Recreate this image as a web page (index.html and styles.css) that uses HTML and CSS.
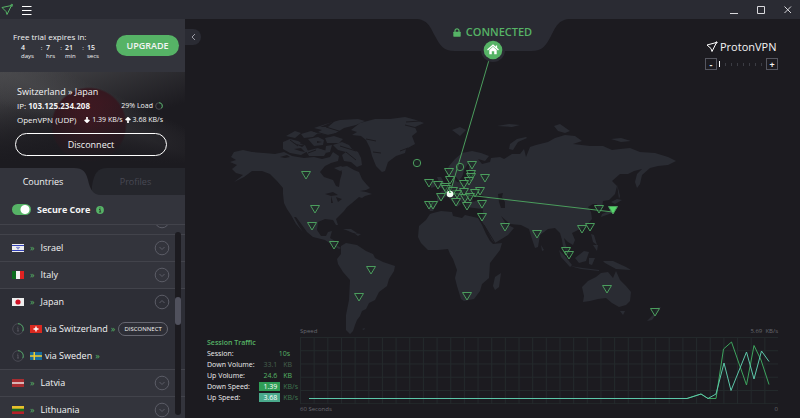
FILE: index.html
```html
<!DOCTYPE html>
<html lang="en">
<head>
<meta charset="utf-8">
<title>ProtonVPN</title>
<link rel="stylesheet" href="styles.css">
</head>
<body>
<svg class="defs" aria-hidden="true">
  <defs>
    <path id="pin" d="M-4.500 -3.500H4.500L0 4Z"/>
    <symbol id="chevron" viewBox="0 0 16 16"><circle cx="8" cy="8" r="6.800"/><path d="M5.500 7l2.500 2.500L10.500 7"/></symbol>
    <symbol id="load" viewBox="0 0 12 12"><circle cx="6" cy="6" r="5.300" fill="none" stroke="#50515b" stroke-width=".8"/><path d="M6 .7A5.300 5.300 0 0 1 10.800 8.200" fill="none" stroke="#4fa865" stroke-width="1"/><path d="M5 5h1v3M5 8h2M6 3.500v.8" fill="none" stroke="#5a5b64" stroke-width=".8"/></symbol>
  </defs>
</svg>
<header class="titlebar">
  <svg class="mark" viewBox="0 0 12 13" aria-hidden="true"><path d="M1 4.500L10.500 2.500 6 11.500 5 8.500Z"/><circle cx="10.800" cy="2.300" r="1"/></svg>
  <button class="menu" aria-label="Menu"><svg viewBox="0 0 10 10"><path d="M0 1.500h9.500M0 5.500h9.500M0 9.500h9.500"/></svg></button>
  <div class="window-controls">
    <button aria-label="Minimize"><svg viewBox="0 0 9 9"><path d="M1 8.500h8"/></svg></button>
    <button aria-label="Maximize"><svg viewBox="0 0 9 9"><path d="M1.500 1.500h7v7h-7z"/></svg></button>
    <button aria-label="Close"><svg viewBox="0 0 9 9"><path d="M1.500 1.500l6.500 6.500M8 1.500L1.500 8"/></svg></button>
  </div>
</header>
<div class="app">
  <aside class="sidebar">
    <section class="trial">
      <div>
        <p>Free trial expires in:</p>
        <div class="countdown">
          <span><b>4</b>days</span><i>:</i><span><b>7</b>hrs</span><i>:</i><span><b>21</b>min</span><i>:</i><span><b>15</b>secs</span>
        </div>
      </div>
      <button class="upgrade">UPGRADE</button>
    </section>
    <section class="connection">
      <h1>Switzerland » Japan</h1>
      <div class="line"><span>IP: <b>103.125.234.208</b></span><span class="small">29% Load <svg class="ring" viewBox="0 0 8 8"><circle cx="4" cy="4" r="3.300" stroke="#4b4b50"/><path d="M4 .7A3.300 3.300 0 0 1 6.500 6.200" stroke="#4fb164"/></svg></span></div>
      <div class="line"><span>OpenVPN (UDP)</span><span class="small"><svg class="arrow" viewBox="0 0 7 7"><path d="M3.500 0v6M.8 3.300l2.700 2.700 2.700-2.700"/></svg> 1.39 KB/s <svg class="arrow" viewBox="0 0 7 7"><path d="M3.500 7V1M.8 3.700L3.500 1l2.700 2.700"/></svg> 3.68 KB/s</span></div>
      <button class="disconnect">Disconnect</button>
    </section>
    <nav class="tabs">
      <svg class="tab-shape" viewBox="0 0 185 27" preserveAspectRatio="none" aria-hidden="true"><path d="M92 27V18C94 5 98 0 107 0H185V27Z" fill="#25262c"/><path d="M0 0H74C83 0 86 4 88 12C90 21 93 27 101 27H0Z" fill="#33343c"/></svg>
      <button class="active">Countries</button><button>Profiles</button>
    </nav>
    <div class="secure">
      <input type="checkbox" id="secure" checked><label for="secure">Secure Core</label>
      <svg class="info" viewBox="0 0 8 8"><circle cx="4" cy="4" r="3.900" fill="#56b366"/><path d="M3 3.500h1.200V6M3 6h2.200M4 1.500v1" stroke="#2d3d33" fill="none"/></svg>
    </div>
    <div class="countries">
      <ul>
        <li><button class="country" aria-label="Expand"><svg class="chev"><use href="#chevron"/></svg></button></li>
        <li><button class="country"><svg class="flag" viewBox="0 0 12 8"><path fill="#eee" d="M0 0h12v8H0z"/><path fill="#3240b8" d="M0 1h12v1H0zM0 6h12v1H0z"/><path d="M4.500 3.300h3L6 5.300z" fill="none" stroke="#3240b8" stroke-width=".6"/></svg><span class="core">»</span><span>Israel</span><svg class="chev"><use href="#chevron"/></svg></button></li>
        <li><button class="country"><svg class="flag" viewBox="0 0 12 8"><path fill="#0b6b1d" d="M0 0h4v8H0z"/><path fill="#f2f2f2" d="M4 0h4v8H4z"/><path fill="#e02222" d="M8 0h4v8H8z"/></svg><span class="core">»</span><span>Italy</span><svg class="chev"><use href="#chevron"/></svg></button></li>
        <li class="open"><button class="country"><svg class="flag" viewBox="0 0 12 8"><path fill="#eee" d="M0 0h12v8H0z"/><circle cx="6" cy="4" r="2.600" fill="#cf1126"/></svg><span class="core">»</span><span>Japan</span><svg class="chev flipped"><use href="#chevron"/></svg></button>
          <div class="via"><svg class="load"><use href="#load"/></svg><svg class="flag" viewBox="0 0 12 8"><path fill="#d92920" d="M0 0h12v8H0z"/><path fill="#fff" d="M5.300 1.500h1.400v1.800h1.800v1.400H6.700v1.800H5.300V4.700H3.500V3.300h1.800z"/></svg><span>via Switzerland</span><span class="core">»</span><button class="drop">DISCONNECT</button></div>
          <div class="via"><svg class="load"><use href="#load"/></svg><svg class="flag" viewBox="0 0 12 8"><path fill="#176b9d" d="M0 0h12v8H0z"/><path fill="#f2cc2b" d="M3.500 0H5v8H3.500zM0 3.300h12v1.400H0z"/></svg><span>via Sweden</span><span class="core">»</span></div>
        </li>
        <li><button class="country"><svg class="flag" viewBox="0 0 12 8"><path fill="#a82d31" d="M0 0h12v8H0z"/><path fill="#eee" d="M0 3.300h12v1.400H0z"/></svg><span class="core">»</span><span>Latvia</span><svg class="chev"><use href="#chevron"/></svg></button></li>
        <li><button class="country"><svg class="flag" viewBox="0 0 12 8"><path fill="#e9c02c" d="M0 0h12v3H0z"/><path fill="#176b22" d="M0 2.700h12v3H0z"/><path fill="#b5202a" d="M0 5.400h12V8H0z"/></svg><span class="core">»</span><span>Lithuania</span><svg class="chev"><use href="#chevron"/></svg></button></li>
      </ul>
      <div class="scroll"><div class="thumb"></div></div>
    </div>
  </aside>
  <main class="stage">
    <svg class="map" viewBox="185 19 615 399" preserveAspectRatio="xMidYMid slice" aria-label="World map">
      <g class="land">
        <path d="M231 157L234 152 243 150 252 152 264 153 275 154 284 152 292 156 304 158 314 157 322 159 330 157 333 152 339 156 338 161 331 163 325 166 320 172 324 177 333 180 336 186 339 187 340 180 342 173 341 167 347 166 354 170 359 172 362 179 367 185 370 188 366 190 360 191 366 192 372 194 365 196 362 198 359 197 352 203 347 207 344 211 340 215 336 219 338 225 336 225 333 220 325 219 318 222 317 230 321 236 326 236 328 232 332 231 330 238 335 241 336 245 341 248 339 249 334 246 325 240 313 237 307 232 302 225 296 217 294 217 299 226 303 232 296 224 291 215 287 209 284 203 283 194 283 188 277 181 270 174 262 171 252 171 244 177 234 182 243 175 236 173 232 169 237 165 230 162 236 160Z"/>
        <path d="M283 142l7-3 8 2 7 4 3 6-7 4-11-2-7-4zM301 134l10-3 7 2-5 4-9 1zM314 128l12-4 14-4 18-1 7 2-9 4-12 3-8 5-9 2-11-2 6-3zM308 139l10-2 6 3-1 5-9 1zM306 151l12-3 9 3-3 5-15 0zM325 138l9-2 9 3-4 4-12 0zM333 145l9-3 7 3 3 4 6 3 3 6 1 7-5 2-6-5-7-1-2-6 4-3-8-2zM326 146l6-1-2 7-5 1zM334 168l7-2 4 3-5 2zM343 229l8 0 6 4-4 0-7-3zM354 233l7 1-3 2zM286 136l9-5 6 2-6 5zM362 329l3-1-1 2z"/>
        <path d="M351 130L360 123 375 119 390 119 405 117 416 120 424 123 415 127 417 132 412 136 415 144 406 149 405 153 396 156 388 162 385 171 382 172 376 166 372 156 370 148 366 140 361 136 352 135 357 132Z"/>
        <path d="M341 246L346 243 357 245 366 251 373 254 375 258 383 262 395 266 394 271 389 279 387 286 379 292 375 300 369 303 366 309 362 311 360 316 357 320 355 325 353 331 350 334 346 330 346 315 349 300 350 280 343 272 338 264 337 259 341 254Z"/>
        <path d="M433 213L441 211 452 212 453 216 462 218 465 215 478 218 482 225 486 234 490 241 493 244 502 243 500 250 490 263 489 278 482 284 480 291 474 299 464 301 461 299 457 286 455 278 457 270 453 259 450 254 448 249 438 250 428 250 421 243 418 237 419 226 426 220 430 214ZM501 273l-2 14-4 3-2-4 2-9z"/>
        <path d="M446 173L449 166 455 159 462 153 472 151 481 153 489 156 485 161 478 159 482 164 490 162 491 158 500 157 504 159 512 154 520 154 524 149 526 157 530 147 536 145 548 142 555 138 565 135 575 136 582 141 573 144 590 146 603 146 612 150 620 149 630 148 640 152 655 153 668 157 676 161 668 165 658 166 650 168 642 175 640 184 637 188 635 182 637 174 642 169 634 171 628 174 620 174 612 181 617 186 615 194 609 200 603 201 602 208 598 209 597 204 593 204 588 207 591 212 592 219 585 227 578 230 572 233 575 240 573 245 568 242 564 238 566 246 571 254 567 254 563 246 562 240 560 233 555 228 548 229 540 235 538 247 535 248 531 236 529 229 521 225 510 224 501 216 506 224 514 228 508 235 495 243 492 240 486 228 481 220 483 214 483 209 474 208 466 207 466 202 463 204 459 199 454 194 456 200 461 204 457 207 451 200 447 196 438 202 433 211 430 211 428 207 429 201 437 201 437 195 442 191 448 187 452 184 453 178 457 182 466 183 469 179 469 174 474 170 469 170 469 162 464 170 462 178 459 181 456 177 453 176 449 177Z"/>
        <path d="M438 187l1-5-2-5 4 0 5 9-3 3zM431 182l5-1 1 5-6 2zM452 130l8-3 6 3-6 6zM509 149l1-5 7-5 9-2 1 1-9 4-5 8zM497 126l12-2 11 1-8 2zM554 126l6-2 10 7-5 2-7-2zM611 139l10-1 10 3-10 1zM617 184l3 12-1 3zM611 202l6-3 5 1-7 4zM614 206l-2 7-11 4 1-3 7-3zM575 258l9-7 5 1-3 9-7 2zM559 250l6 6 7 9-2 2-9-10zM570 266l13 2 16 2 0 1-18-2zM589 258l6 0-3 7-3-1zM591 234l3 1 3 10-4-3zM593 245l5 0-1 6zM603 261l10 0 13 6 5 3-15-1-11-6zM541 245l3 5-2 1zM610 263l5-2"/>
        <path d="M582 287L588 281 596 277 601 273 608 272 613 278 616 271 620 280 626 286 631 292 630 301 626 305 619 307 612 303 606 298 598 299 590 301 583 302 584 296ZM620 311h5l-2 4zM661 307l-3 5-6 8-5 1 8-8 1-5z"/>
      </g>
      <path class="water" d="M472 196l8-2 8 4-6 2-9 1zM498 194l5-1-1 4 3 5 0 6-4 0-2-6zM325 194l8-2 5 3-7 1zM331 196l2 7-2 0zM336 197l6 2-4 3zM293 143l7 2 6-1-4 3zM335 121l-15 6 8 0zM294 149l7-1 4 4-5-1zM317 141l5 1-5 1zM280 157l7-2 3 2-5 1z"/>
      <path class="coast" d="M313 131l17 5 14-6M300 143l24 6M326 127l16 5M340 146l16 5M484 225l11 18M460 180l9-12M466 201l9 0M290 140l8 6M308 153l8-3M346 152l10 8M405 125l12 3M400 151l8-3M420 121l-14 1M366 139l10 2M373 152l8 1"/>
      <path class="route" d="M489 60L450 193 613 212"/>
      <g class="pins">
        <use href="#pin" x="306" y="175"/><use href="#pin" x="315" y="209"/><use href="#pin" x="312" y="226"/><use href="#pin" x="334" y="245"/><use href="#pin" x="371" y="270"/><use href="#pin" x="359" y="297"/>
        <use href="#pin" x="429" y="183"/><use href="#pin" x="438" y="185"/><use href="#pin" x="449" y="172"/><use href="#pin" x="472" y="165"/><use href="#pin" x="471" y="174"/><use href="#pin" x="471" y="177"/><use href="#pin" x="485" y="178"/><use href="#pin" x="450" y="180"/><use href="#pin" x="469" y="181"/><use href="#pin" x="464" y="184"/><use href="#pin" x="445" y="187"/><use href="#pin" x="446" y="189"/><use href="#pin" x="441" y="197"/><use href="#pin" x="429" y="205"/><use href="#pin" x="433" y="205"/><use href="#pin" x="456" y="202"/><use href="#pin" x="467" y="206"/><use href="#pin" x="482" y="204"/><use href="#pin" x="482" y="217"/><use href="#pin" x="505" y="227"/><use href="#pin" x="537" y="234"/><use href="#pin" x="480" y="191"/><use href="#pin" x="475" y="193"/><use href="#pin" x="464" y="192"/><use href="#pin" x="457" y="194"/><use href="#pin" x="465" y="198"/><use href="#pin" x="470" y="197"/><use href="#pin" x="453" y="191"/><use href="#pin" x="467" y="296"/>
        <use href="#pin" x="599" y="209"/><use href="#pin" x="582" y="229"/><use href="#pin" x="590" y="227"/><use href="#pin" x="566" y="251"/><use href="#pin" x="569" y="255"/><use href="#pin" x="607" y="289"/><use href="#pin" x="655" y="312"/>
        <use class="exit" href="#pin" x="613" y="210"/>
        <circle cx="417" cy="163" r="3.700"/><circle cx="460" cy="167" r="3.700"/>
      </g>
      <circle cx="450" cy="194" r="3.300" fill="#f3fff5"/><path d="M449 190v3h2.500z" fill="#56b366"/>
    </svg>
    <button class="collapse" aria-label="Collapse sidebar"><svg viewBox="0 0 5 8"><path d="M4 1L1 4l3 3"/></svg></button>
    <div class="status">
      <svg class="notch" viewBox="0 0 156 32" preserveAspectRatio="none" aria-hidden="true"><path d="M0 0C13 0 15 8 20 17S28 32 40 32H116C128 32 131 26 136 17S143 0 156 0Z"/></svg>
      <svg class="lock" viewBox="0 0 8 9"><path d="M2 4V2.800a2 2 0 0 1 4 0V4" fill="none" stroke="#56b366" stroke-width="1.200"/><rect x=".3" y="3.700" width="7.400" height="5" rx=".6" fill="#56b366"/></svg>
      <strong>CONNECTED</strong>
      <svg class="home" viewBox="0 0 24 24"><circle cx="12" cy="12" r="12" fill="#2a2b33"/><circle cx="12" cy="12" r="9.300" fill="#56b366"/><path d="M6.500 12L12 7.200 17.500 12M15.500 7.500v2.500" fill="none" stroke="#fff" stroke-width="1.300"/><path d="M8.300 12L12 8.800l3.700 3.200v4.300h-2.500v-3h-2.400v3H8.300z" fill="#fff"/></svg>
    </div>
    <div class="brand">
      <div class="logo"><svg viewBox="0 0 12 12"><path d="M1 4L10.500 1.500 6 10.500 5 7.500Z"/><circle cx="10.500" cy="1.500" r=".7"/></svg><span>ProtonVPN</span></div>
      <div class="zoom"><button aria-label="Zoom out">-</button><input type="range" aria-label="Zoom" min="0" max="7" value="0"><button aria-label="Zoom in">+</button></div>
    </div>
    <section class="traffic">
      <table>
        <caption>Session Traffic</caption>
        <tbody>
        <tr><th>Session:</th><td class="time" colspan="2">10s</td></tr>
        <tr><th>Down Volume:</th><td class="dim"><span>33.1</span></td><td class="dim unit">KB</td></tr>
        <tr><th>Up Volume:</th><td><span>24.6</span></td><td class="unit">KB</td></tr>
        <tr><th>Down Speed:</th><td><span class="badge download">1.39</span></td><td class="soft unit">KB/s</td></tr>
        <tr><th>Up Speed:</th><td><span class="badge upload">3.68</span></td><td class="soft unit">KB/s</td></tr>
        </tbody>
      </table>
      <div class="graph">
        <div class="legend"><span>Speed</span><span>5.69&nbsp; KB/s</span></div>
        <svg viewBox="300 337 478 67" preserveAspectRatio="none">
          <defs><pattern id="grid" x="300" y="337" width="13.657" height="13.250" patternUnits="userSpaceOnUse"><path d="M.5 0V14M0 .5H14" stroke="#23292b" fill="none"/></pattern></defs>
          <path fill="url(#grid)" d="M300 337h478v67H300z"/>
          <path class="down-line" d="M309 398.500H687L701 394 708 398.500 716 398.500 723.500 349 731.500 342 746.500 385 754 345.500 761 360 769 384.500"/>
          <path class="up-line" d="M309 398.500H687L701 394 708 398.500 716 394 724 363 731 390.500 746.500 352 754 379 761.500 351 769 361.500"/>
        </svg>
        <div class="legend"><span>60 Seconds</span><span>0</span></div>
      </div>
    </section>
  </main>
</div>
</body>
</html>
```
FILE: styles.css
```css
* { box-sizing: border-box; }
body { margin: 0; height: 100vh; display: flex; flex-direction: column; overflow: hidden; background: #1c1b20; color: #f4f4f5; font: 8px/12px "Open Sans", "Noto Sans", sans-serif; }
button { margin: 0; padding: 0; border: 0; background: none; color: inherit; font: inherit; }
p, h1, ul { margin: 0; padding: 0; list-style: none; }
svg { display: block; flex: none; }
.defs { position: absolute; width: 0; height: 0; }

.titlebar { display: flex; align-items: center; flex: none; height: 19px; background: #2a2b33; }
.mark { width: 12px; height: 13px; margin: 0 9px 0 1px; fill: none; stroke: #56b366; stroke-width: 1px; }
.menu svg { width: 10px; height: 10px; stroke: #fff; }
.window-controls { display: flex; gap: 18px; margin-left: auto; padding-right: 8px; }
.window-controls svg { width: 9px; height: 9px; fill: none; stroke: #d8d8dc; }

.app { display: flex; flex: 1; min-height: 0; }
.sidebar { display: flex; flex-direction: column; flex: none; width: 185px; background: #33343c; }
.trial { display: flex; justify-content: space-between; align-items: center; height: 53px; padding: 0 6px 0 13px; white-space: nowrap; }
.trial p { padding-bottom: 1px; }
.countdown { display: grid; grid-template-columns: 16px 9px 11px 8px 14px 8px 14px; padding-left: 8px; font-size: 6px; line-height: 8px; }
.countdown b { display: block; font-size: 7px; font-weight: 600; }
.countdown i { font-style: normal; text-align: center; }
.upgrade { width: 63px; height: 21px; border-radius: 11px; background: #56b366; font-size: 9px; font-weight: 600; line-height: 20px; }

.connection { display: flex; flex-direction: column; height: 96px; padding: 13px 18px 0 17px; background: linear-gradient(#1c1b2000 30%, #1c1b20 95%), radial-gradient(circle at 89px 53px, #4c1822 0, #351820 36px, transparent 38px), linear-gradient(205deg, transparent 30%, #4a4a4d99 46%, transparent 65%), linear-gradient(160deg, #48484b, #1c1b20 60%); }
.connection h1 { font-size: 9px; line-height: 14px; font-weight: 400; }
.line { display: flex; justify-content: space-between; align-items: center; height: 14px; margin-right: 4px; }
.small { display: flex; align-items: center; gap: 2px; font-size: 7px; }
.ring { width: 8px; height: 8px; fill: none; }
.arrow { width: 6px; height: 6px; fill: none; stroke: #fff; stroke-width: 2px; }
.disconnect { height: 23px; margin: 6px 0 0 -2px; border: 1px solid #fff; border-radius: 12px; font-size: 9px; }

.tabs { position: relative; display: flex; height: 27px; flex: none; background: #1c1b20; }
.tab-shape { position: absolute; inset: 0; width: 100%; height: 100%; }
.tabs button { position: relative; width: 86px; font-size: 9px; }
.tabs button + button { width: 99px; color: #484954; }
.secure { display: flex; align-items: center; gap: 6px; height: 29px; flex: none; padding-left: 12px; font-size: 9px; font-weight: 700; }
.secure input { appearance: none; width: 19px; height: 11px; margin: 0; border-radius: 6px; background: radial-gradient(circle at 13px 50%, #fff 4px, #56b366 5px); }
.info { width: 8px; height: 8px; }

.countries { position: relative; flex: 1; min-height: 0; overflow: hidden; border-top: 1px solid #42434b; }
.countries ul { margin-top: -17px; }
.countries li { border-bottom: 1px solid #42434b; font-size: 9px; }
.countries .open { background: #2d2e36; }
.country { display: flex; align-items: center; width: 100%; height: 26px; padding: 0 15px 0 12px; gap: 6px; text-align: left; }
.flag { width: 12px; height: 8px; }
.core { color: #56b366; }
.chev { width: 16px; height: 16px; margin-left: auto; fill: none; stroke: #5b5c66; }
.flipped { transform: rotate(180deg); }
.via { display: flex; align-items: center; height: 27px; padding: 0 17px 0 12px; gap: 3px; white-space: nowrap; }
.load { width: 12px; height: 12px; margin-right: 3px; }
.drop { width: 51px; height: 14px; margin-left: auto; border: 1px solid #666771; border-radius: 7px; font-size: 6px; line-height: 12px; }
.scroll { position: absolute; top: 7px; right: 4px; bottom: 3px; width: 6px; display: flow-root; border-radius: 3px; background: #1c1b20; }
.thumb { height: 28px; margin-top: 65px; border-radius: 3px; background: #50515d; }

.stage { position: relative; display: flex; flex-direction: column; flex: 1; min-width: 0; }
.map { position: absolute; inset: 0; width: 100%; height: 100%; }
.land { fill: #2a2c33; }
.water { fill: #1c1b20; }
.coast { fill: none; stroke: #1c1b20; }
.route { fill: none; stroke: #4b9d5d; stroke-width: 1px; }
.pins { fill: #1c292680; stroke: #4b9d5d; stroke-width: 1px; }
.exit { fill: #56d66a; }
.collapse { position: absolute; top: 10px; left: 0; display: grid; place-items: center; width: 16px; height: 16px; border-radius: 0 8px 8px 0; background: #2a2b33; }
.collapse svg { width: 5px; height: 8px; fill: none; stroke: #9a9ba4; }
.status { position: relative; display: flex; align-items: center; justify-content: center; align-self: center; gap: 5px; width: 156px; height: 32px; padding-bottom: 6px; color: #56b366; font-size: 11px; }
.status strong { position: relative; font-weight: 600; }
.notch { position: absolute; inset: 0; width: 100%; height: 100%; fill: #2a2b33; }
.lock { position: relative; width: 8px; height: 9px; }
.home { position: absolute; left: 66px; top: 19px; width: 24px; height: 24px; }
.brand { position: absolute; top: 20px; right: 22px; width: 73px; }
.logo { display: flex; align-items: center; gap: 2px; padding-left: 1px; font-size: 11px; line-height: 16px; }
.logo svg { width: 12px; height: 12px; fill: none; stroke: #fff; }
.zoom { display: flex; align-items: center; justify-content: space-between; margin-top: 3px; }
.zoom button { width: 12px; height: 12px; border: 1px solid #55565f; font-size: 9px; font-weight: 700; line-height: 9px; }
.zoom input { appearance: none; width: 46px; height: 6px; margin: 0; background: repeating-linear-gradient(90deg, #3b3c43 0 1px, transparent 1px 6px) 0 50% / 100% 3px no-repeat; }
.zoom input::-webkit-slider-thumb { appearance: none; width: 1px; height: 6px; background: #fff; }

.traffic { position: relative; display: flex; align-items: flex-start; gap: 2px; margin-top: auto; padding: 0 22px 3px; }
.traffic table { flex: none; width: 91px; margin-top: 11px; border-collapse: collapse; font-size: 7px; line-height: 11px; color: #56b366; }
.traffic caption { text-align: left; font-weight: 600; }
.traffic th, .traffic td { padding: 0; text-align: right; white-space: nowrap; height: 11px; }
.traffic th { color: #eee; font-weight: 400; text-align: left; }
.traffic td span { padding-right: 3px; }
.traffic .time { padding-right: 8px; }
.traffic .unit { width: 17px; padding-left: 3px; text-align: left; }
.traffic .dim { color: #47614f; }
.traffic .soft { color: #3f7750; }
.traffic .badge { display: block; width: 21px; height: 9px; margin-left: auto; color: #fff; line-height: 9px; }
.download { background: #2f9e56; }
.upload { background: #4aaa8c; }
.graph { flex: 1; min-width: 0; }
.graph svg { width: 100%; height: 67px; }
.legend { display: flex; justify-content: space-between; color: #686970; font-size: 6px; line-height: 11px; }
.down-line, .up-line { fill: none; stroke: #3da45e; stroke-width: 1px; }
.up-line { stroke: #5cc7a9; }
```
